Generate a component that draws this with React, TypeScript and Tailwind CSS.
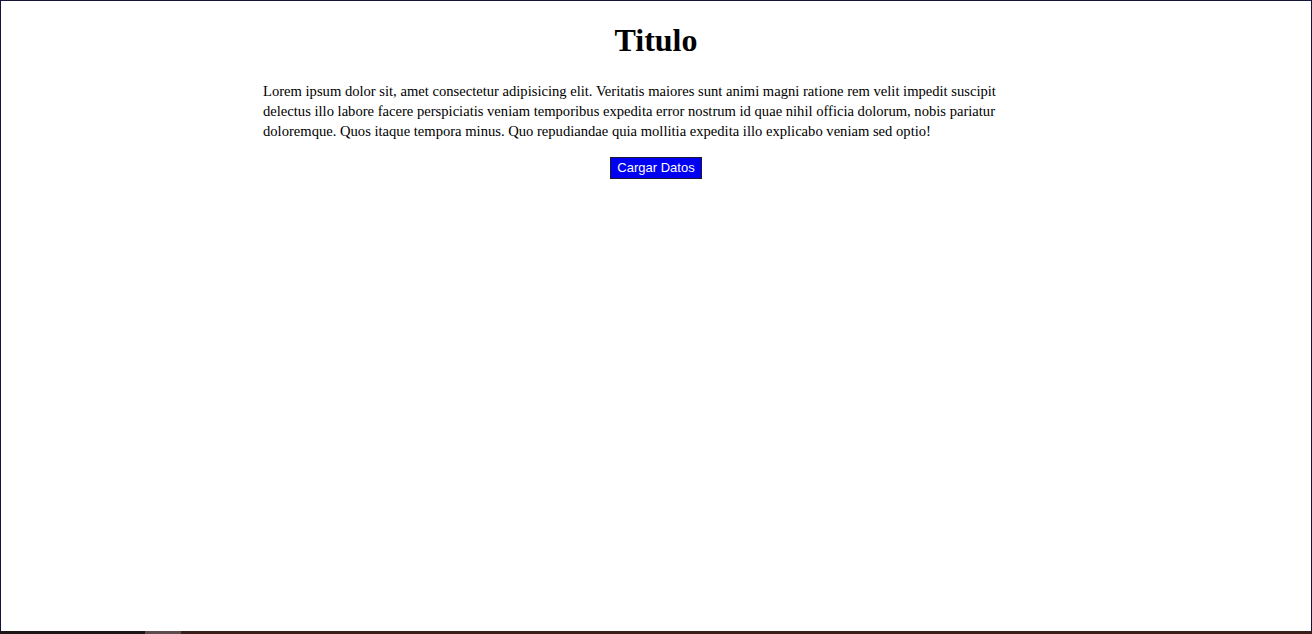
import React from 'react';

const App: React.FC = () => {
  return (
    <div className="h-screen w-screen flex flex-col bg-white overflow-hidden">
      {/* page frame */}
      <div className="flex-1 border border-b-0 border-[#14143c] bg-white">
        <div className="text-black" style={{ fontFamily: '"Liberation Serif", "Times New Roman", serif' }}>
          <h1 className="text-[32px] font-bold text-center mt-[21px] leading-[37px]">Titulo</h1>
          <p className="w-[60%] mx-auto mt-[22px] text-[14.6px] leading-[20px]">
            Lorem ipsum dolor sit, amet consectetur adipisicing elit. Veritatis maiores sunt animi magni ratione rem velit impedit suscipit
            <br />
            delectus illo labore facere perspiciatis veniam temporibus expedita error nostrum id quae nihil officia dolorum, nobis pariatur
            <br />
            doloremque. Quos itaque tempora minus. Quo repudiandae quia mollitia expedita illo explicabo veniam sed optio!
          </p>
          <div className="flex justify-center mt-[16px]">
            <button
              className="bg-[#0000f5] text-white text-[13px] leading-[16px] px-[6px] py-[2px] border border-[#1a1a33]"
              style={{ fontFamily: '"Liberation Sans", Arial, sans-serif' }}
            >
              Cargar Datos
            </button>
          </div>
        </div>
      </div>
      {/* bottom strip */}
      <div className="h-[3px] flex">
        <div className="w-[145px] bg-[#1e1614]" />
        <div className="w-[36px] bg-[#5e4c4c]" />
        <div className="flex-1 bg-[#3a1e1a]" />
      </div>
    </div>
  );
};

export default App;
